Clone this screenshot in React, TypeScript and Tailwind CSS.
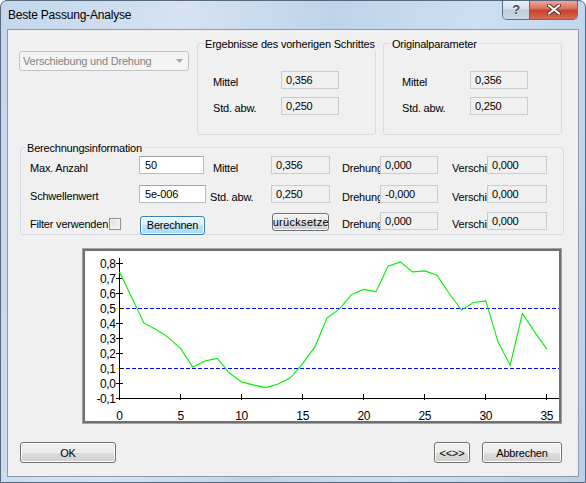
import React from 'react';

// curve values read off the plot, one per x step 0..35
const curve = [
  0.744, 0.574, 0.404, 0.36, 0.307, 0.233, 0.11, 0.15, 0.167, 0.07, 0.011, -0.011,
  -0.027, -0.004, 0.038, 0.133, 0.244, 0.438, 0.496, 0.593, 0.627, 0.611, 0.782, 0.811,
  0.744, 0.751, 0.722, 0.6, 0.489, 0.54, 0.551, 0.278, 0.122, 0.467, 0.344, 0.229,
];

// plot mapping in page coordinates (svg is shifted by the frame offset)
const xp = (u: number) => 119.5 + u * 12.21;
const yp = (v: number) => 383.5 - v * 150;

const btn =
  'rounded-[3px] border border-[#707070] bg-[linear-gradient(#f2f2f2_0%,#ebebeb_50%,#dddddd_50%,#cfcfcf_100%)] shadow-[inset_0_0_0_1px_#fcfcfc] text-[11px] leading-[18px] text-black';
const roBox = 'h-[18px] border border-[#c9ccd0] bg-[#f0f0f0] pl-[4px] text-[11px] leading-[16px] text-black';
const editBox = 'h-[18px] border border-[#b8bcc2] border-t-[#a3a7ad] bg-white pl-[5px] text-[11px] leading-[16px] text-black';

function GroupBox({ label, labelLeft, className, children }: { label: string; labelLeft: string; className: string; children: React.ReactNode }) {
  return (
    <div className={`relative rounded-[3px] border border-[#d5dbe1] ${className}`}>
      <span className={`absolute -top-[7px] ${labelLeft} bg-[#f0f0f0] px-[2px] text-[11px] leading-[14px] whitespace-nowrap`}>
        {label}
      </span>
      {children}
    </div>
  );
}

function ResultRows({ labelW, labelPl }: { labelW: string; labelPl: string }) {
  return (
    <div className="flex flex-col gap-[8px] pt-[27px]">
      <div className="flex">
        <div className={`${labelW} ${labelPl} pt-[4px] text-[11px] leading-[14px]`}>Mittel</div>
        <div className={`w-[58px] ${roBox}`}>0,356</div>
      </div>
      <div className="flex">
        <div className={`${labelW} ${labelPl} pt-[4px] text-[11px] leading-[14px]`}>Std. abw.</div>
        <div className={`w-[58px] ${roBox}`}>0,250</div>
      </div>
    </div>
  );
}

function Clipped({ text, w, pl }: { text: string; w: string; pl: string }) {
  return (
    <div className={`${w} ${pl} overflow-hidden whitespace-nowrap pt-[5px] text-[11px] leading-[14px]`}>{text}</div>
  );
}

function Chart() {
  const yTicks = [0.8, 0.7, 0.6, 0.5, 0.4, 0.3, 0.2, 0.1, 0.0, -0.1];
  const xTicks = [0, 5, 10, 15, 20, 25, 30, 35];
  const line = curve.map((v, i) => `${xp(i).toFixed(1)},${yp(v).toFixed(1)}`).join(' ');
  return (
    <div className="ml-[74px] mt-[13px] h-[176px] w-[480px] border border-[#a3a3a3]">
      <div className="h-full w-full border-2 border-[#707070] bg-white">
        <svg width="474" height="170" className="block">
          <g transform="translate(-85,-251)" fontFamily="'Liberation Sans', Arial, sans-serif" fontSize="12">
            {[0.5, 0.1].map((v) => (
              <line key={v} x1="120" x2="559" y1={yp(v)} y2={yp(v)} stroke="#0000ff" strokeDasharray="4 2" shapeRendering="crispEdges" />
            ))}
            <line x1="119.5" x2="119.5" y1="258" y2="398.5" stroke="#000" shapeRendering="crispEdges" />
            <line x1="119" x2="559" y1="398.5" y2="398.5" stroke="#000" shapeRendering="crispEdges" />
            {yTicks.map((v) => (
              <g key={v}>
                <line x1="116" x2="123" y1={yp(v)} y2={yp(v)} stroke="#000" shapeRendering="crispEdges" />
                <text x="115.5" y={yp(v) + 4.5} textAnchor="end" letterSpacing="-0.4" fill="#000">
                  {v.toFixed(1).replace('.', ',')}
                </text>
              </g>
            ))}
            {[0.5, 0.1].map((v) => (
              <line key={'y' + v} x1="116" x2="119" y1={yp(v)} y2={yp(v)} stroke="#ffff00" shapeRendering="crispEdges" />
            ))}
            {xTicks.map((u) => (
              <g key={u}>
                <line x1={xp(u)} x2={xp(u)} y1="394" y2="400" stroke="#000" shapeRendering="crispEdges" />
                <text x={xp(u)} y="419.5" textAnchor="middle" letterSpacing="-0.4" fill="#000">
                  {u}
                </text>
              </g>
            ))}
            <polyline points={line} fill="none" stroke="#00f000" strokeWidth="1.1" />
          </g>
        </svg>
      </div>
    </div>
  );
}

export default function App() {
  return (
    <div
      className="relative flex h-[483px] w-[586px] flex-col overflow-hidden rounded-t-[7px] border border-[#56687c] bg-[linear-gradient(100deg,#c4d7ec_0%,#d5e3f2_28%,#bed3ea_50%,#cddff1_72%,#b9d0e9_100%)] tracking-[-0.2px] text-black"
      style={{ fontFamily: "'Liberation Sans', Arial, sans-serif" }}
    >
      {/* title bar */}
      <div className="flex h-[28px] items-start">
        <div className="pl-[7px] pt-[6px] text-[12px] leading-[16px]">Beste Passung-Analyse</div>
        <div className="-mt-px mr-[7px] ml-auto flex h-[20px] overflow-hidden rounded-b-[5px] border border-t-0 border-[#5d6f85]">
          <div className="flex w-[27px] items-center justify-center border-r border-[#5d6f85] bg-[linear-gradient(#eef3f8_0%,#d7e1ec_45%,#bccbdb_55%,#cbd8e5_100%)]">
            <span className="text-[13px] font-bold leading-none text-[#3d4a5a] [text-shadow:0_0_2px_#fff]">?</span>
          </div>
          <div className="flex w-[47px] items-center justify-center bg-[linear-gradient(#eab0a2_0%,#d9725d_45%,#c7432c_55%,#d76a52_100%)]">
            <svg width="14" height="11" viewBox="0 0 14 11">
              <path d="M2 1.5 L12 9.5 M12 1.5 L2 9.5" stroke="#5a2a22" strokeWidth="4" strokeLinecap="round" />
              <path d="M2 1.5 L12 9.5 M12 1.5 L2 9.5" stroke="#fff" strokeWidth="2.2" strokeLinecap="round" />
            </svg>
          </div>
        </div>
      </div>

      {/* client area */}
      <div className="ml-[6px] flex h-[448px] w-[572px] flex-col border border-[#8d9cad] bg-[#f0f0f0]">
        <div className="mt-[13px] flex h-[92px] items-start">
          <div className="ml-[11px] mt-[8px] flex h-[20px] w-[170px] items-center justify-between rounded-[3px] border border-[#c3c3c3] bg-[#f4f4f4] pl-[3px] text-[11px] text-[#838383]">
            <span>Verschiebung und Drehung</span>
            <svg width="8" height="5" viewBox="0 0 8 5" className="mr-[4px]">
              <path d="M0 0 H7 L3.5 4 Z" fill="#a6a6a6" />
            </svg>
          </div>
          <GroupBox label="Ergebnisse des vorherigen Schrittes" labelLeft="left-[5px]" className="ml-[8px] h-[92px] w-[179px]">
            <ResultRows labelW="w-[83px]" labelPl="pl-[15px]" />
          </GroupBox>
          <GroupBox label="Originalparameter" labelLeft="left-[6px]" className="ml-[7px] h-[92px] w-[179px]">
            <ResultRows labelW="w-[86px]" labelPl="pl-[18px]" />
          </GroupBox>
        </div>

        <GroupBox label="Berechnungsinformation" labelLeft="left-[4px]" className="ml-[12px] mt-[12px] h-[88px] w-[544px]">
          <div className="flex flex-col pl-[9px] pt-[8px]">
            <div className="flex">
              <div className="w-[109px] pt-[5px] text-[11px] leading-[14px]">Max. Anzahl</div>
              <div className="w-[67px]">
                <div className={`w-[65px] ${editBox}`}>50</div>
              </div>
              <Clipped text="Mittel" w="w-[65px]" pl="pl-[7px]" />
              <div className={`w-[59px] ${roBox}`}>0,356</div>
              <Clipped text="Drehung" w="w-[50px]" pl="pl-[12px]" />
              <div className={`w-[58px] ${roBox}`}>0,000</div>
              <Clipped text="Verschiebung" w="w-[49px]" pl="pl-[14px]" />
              <div className={`w-[60px] ${roBox}`}>0,000</div>
            </div>
            <div className="mt-[10px] flex">
              <div className="w-[109px] pt-[4px] text-[11px] leading-[14px]">Schwellenwert</div>
              <div className={`w-[67px] ${editBox}`}>5e-006</div>
              <Clipped text="Std. abw." w="w-[65px]" pl="pl-[4px]" />
              <div className={`w-[59px] ${roBox}`}>0,250</div>
              <Clipped text="Drehung" w="w-[50px]" pl="pl-[12px]" />
              <div className={`w-[58px] ${roBox}`}>-0,000</div>
              <Clipped text="Verschiebung" w="w-[49px]" pl="pl-[14px]" />
              <div className={`w-[60px] ${roBox}`}>0,000</div>
            </div>
            <div className="mt-[8px] flex">
              <div className="flex w-[109px] items-start">
                <span className="pt-[5px] text-[11px] leading-[14px]">Filter verwenden</span>
                <span className="ml-[1px] mt-[6px] h-[12px] w-[12px] border border-[#8f8f8f] bg-[linear-gradient(135deg,#dcdcdc,#f8f8f8)] shadow-[inset_0_0_0_1px_#f4f4f4]" />
              </div>
              <div className="w-[67px]">
                <button className="mt-px ml-px h-[19px] w-[65px] rounded-[3px] border border-[#3c7fb1] bg-[linear-gradient(#eaf6fd_0%,#d9f0fc_50%,#bee6fd_50%,#a7d9f5_100%)] text-[11px] leading-[17px] shadow-[inset_0_0_0_1px_#f8fcfe]">
                  Berechnen
                </button>
              </div>
              <div className="w-[65px]" />
              <div className="w-[59px]">
                <button className={`mt-px ml-px flex h-[18px] w-[57px] items-center justify-center overflow-hidden whitespace-nowrap ${btn}`}>
                  <span className="tracking-[0.3px]">Zurücksetzen</span>
                </button>
              </div>
              <Clipped text="Drehung" w="w-[50px]" pl="pl-[12px]" />
              <div className={`w-[58px] ${roBox}`}>0,000</div>
              <Clipped text="Verschiebung" w="w-[49px]" pl="pl-[14px]" />
              <div className={`w-[60px] ${roBox}`}>0,000</div>
            </div>
          </div>
        </GroupBox>

        <Chart />

        <div className="mt-[18px] flex h-[21px]">
          <button className={`ml-[12px] w-[96px] ${btn}`}>OK</button>
          <button className={`ml-auto w-[36px] ${btn}`}>&lt;&lt;&gt;&gt;</button>
          <button className={`ml-[12px] mr-[16px] w-[80px] ${btn}`}>Abbrechen</button>
        </div>
      </div>
    </div>
  );
}
